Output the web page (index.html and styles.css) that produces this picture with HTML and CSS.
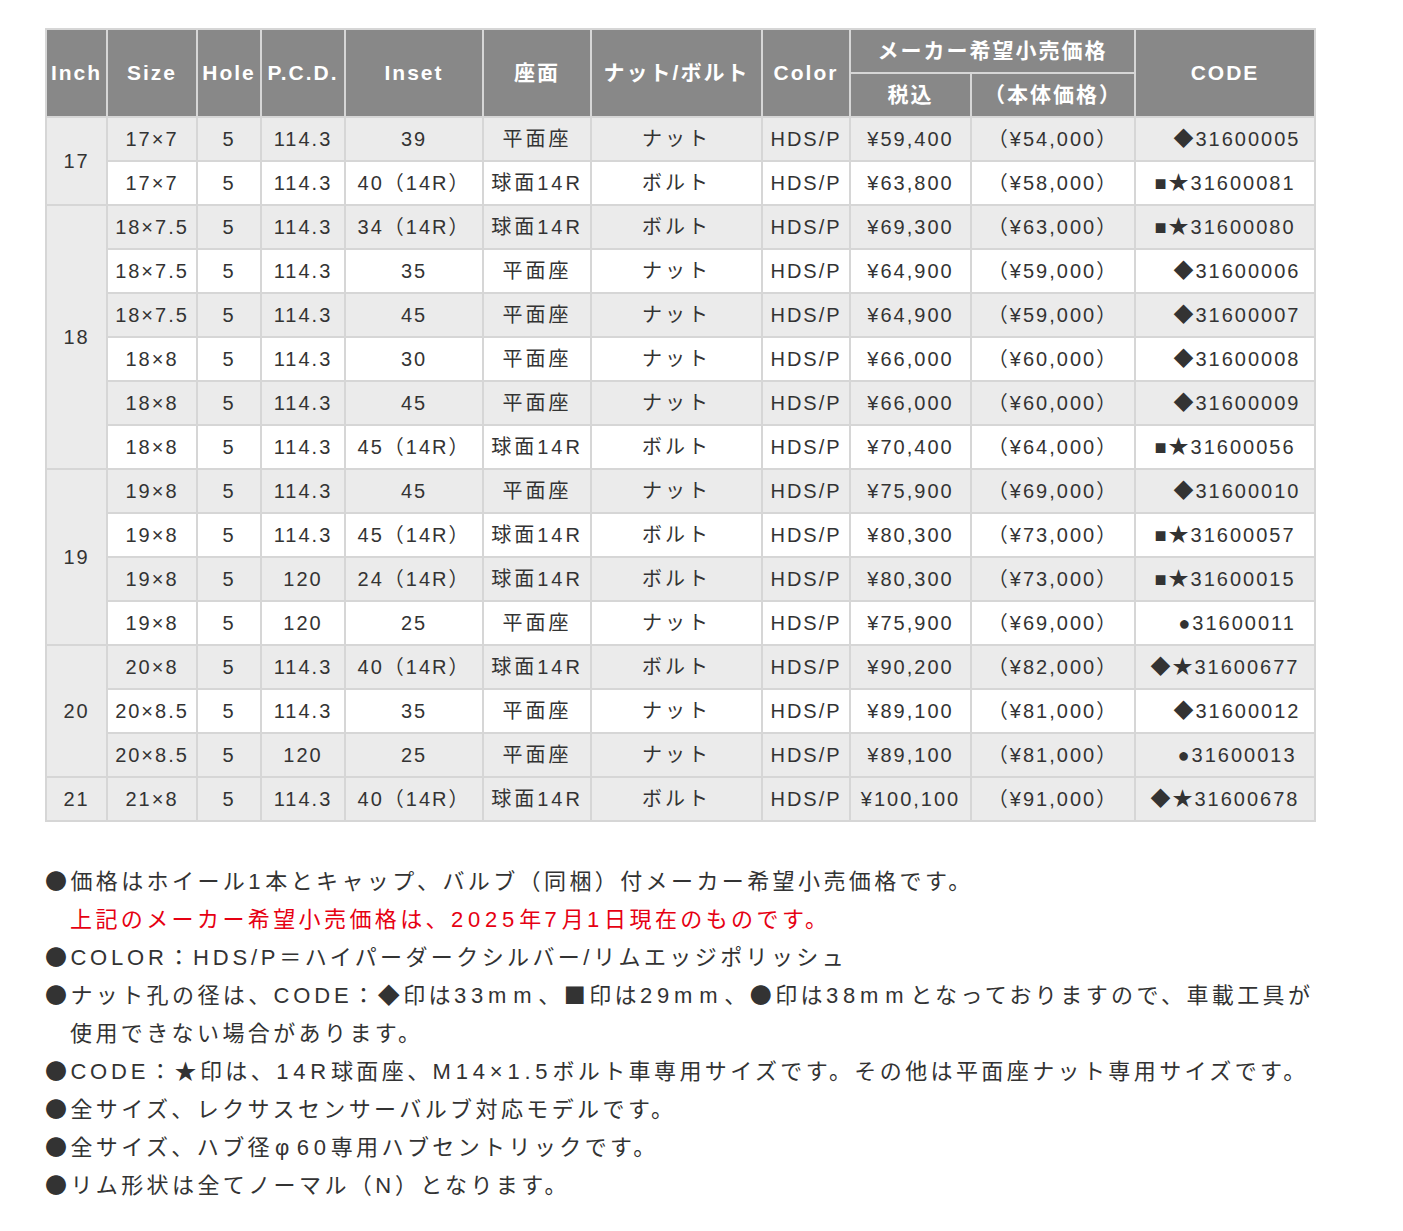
FILE: index.html
```html
<!DOCTYPE html>
<html lang="ja">
<head>
<meta charset="utf-8">
<title>Size table</title>
<link rel="stylesheet" href="styles.css">
</head>
<body>
<div class="page">
  <table class="spec">
    <colgroup>
      <col class="w-inch"><col class="w-size"><col class="w-hole"><col class="w-pcd"><col class="w-inset"><col class="w-seat"><col class="w-nut"><col class="w-color"><col class="w-tax"><col class="w-base"><col class="w-code">
    </colgroup>
    <thead>
      <tr>
        <th rowspan="2">Inch</th>
        <th rowspan="2">Size</th>
        <th rowspan="2">Hole</th>
        <th rowspan="2">P.C.D.</th>
        <th rowspan="2">Inset</th>
        <th rowspan="2">座面</th>
        <th rowspan="2">ナット/ボルト</th>
        <th rowspan="2">Color</th>
        <th colspan="2">メーカー希望小売価格</th>
        <th rowspan="2">CODE</th>
      </tr>
      <tr>
        <th>税込</th>
        <th>（本体価格）</th>
      </tr>
    </thead>
    <tbody>
      <tr class="g">
        <td rowspan="2" class="inch">17</td>
        <td>17×7</td><td>5</td><td>114.3</td><td>39</td><td class="jp">平面座</td><td class="jp">ナット</td><td>HDS/P</td><td>¥59,400</td><td>（¥54,000）</td><td class="code pad">◆31600005</td>
      </tr>
      <tr>
        <td>17×7</td><td>5</td><td>114.3</td><td>40（14R）</td><td class="jp">球面14R</td><td class="jp">ボルト</td><td>HDS/P</td><td>¥63,800</td><td>（¥58,000）</td><td class="code">■★31600081</td>
      </tr>
      <tr class="g">
        <td rowspan="6" class="inch">18</td>
        <td>18×7.5</td><td>5</td><td>114.3</td><td>34（14R）</td><td class="jp">球面14R</td><td class="jp">ボルト</td><td>HDS/P</td><td>¥69,300</td><td>（¥63,000）</td><td class="code">■★31600080</td>
      </tr>
      <tr>
        <td>18×7.5</td><td>5</td><td>114.3</td><td>35</td><td class="jp">平面座</td><td class="jp">ナット</td><td>HDS/P</td><td>¥64,900</td><td>（¥59,000）</td><td class="code pad">◆31600006</td>
      </tr>
      <tr class="g">
        <td>18×7.5</td><td>5</td><td>114.3</td><td>45</td><td class="jp">平面座</td><td class="jp">ナット</td><td>HDS/P</td><td>¥64,900</td><td>（¥59,000）</td><td class="code pad">◆31600007</td>
      </tr>
      <tr>
        <td>18×8</td><td>5</td><td>114.3</td><td>30</td><td class="jp">平面座</td><td class="jp">ナット</td><td>HDS/P</td><td>¥66,000</td><td>（¥60,000）</td><td class="code pad">◆31600008</td>
      </tr>
      <tr class="g">
        <td>18×8</td><td>5</td><td>114.3</td><td>45</td><td class="jp">平面座</td><td class="jp">ナット</td><td>HDS/P</td><td>¥66,000</td><td>（¥60,000）</td><td class="code pad">◆31600009</td>
      </tr>
      <tr>
        <td>18×8</td><td>5</td><td>114.3</td><td>45（14R）</td><td class="jp">球面14R</td><td class="jp">ボルト</td><td>HDS/P</td><td>¥70,400</td><td>（¥64,000）</td><td class="code">■★31600056</td>
      </tr>
      <tr class="g">
        <td rowspan="4" class="inch">19</td>
        <td>19×8</td><td>5</td><td>114.3</td><td>45</td><td class="jp">平面座</td><td class="jp">ナット</td><td>HDS/P</td><td>¥75,900</td><td>（¥69,000）</td><td class="code pad">◆31600010</td>
      </tr>
      <tr>
        <td>19×8</td><td>5</td><td>114.3</td><td>45（14R）</td><td class="jp">球面14R</td><td class="jp">ボルト</td><td>HDS/P</td><td>¥80,300</td><td>（¥73,000）</td><td class="code">■★31600057</td>
      </tr>
      <tr class="g">
        <td>19×8</td><td>5</td><td>120</td><td>24（14R）</td><td class="jp">球面14R</td><td class="jp">ボルト</td><td>HDS/P</td><td>¥80,300</td><td>（¥73,000）</td><td class="code">■★31600015</td>
      </tr>
      <tr>
        <td>19×8</td><td>5</td><td>120</td><td>25</td><td class="jp">平面座</td><td class="jp">ナット</td><td>HDS/P</td><td>¥75,900</td><td>（¥69,000）</td><td class="code pad">●31600011</td>
      </tr>
      <tr class="g">
        <td rowspan="3" class="inch">20</td>
        <td>20×8</td><td>5</td><td>114.3</td><td>40（14R）</td><td class="jp">球面14R</td><td class="jp">ボルト</td><td>HDS/P</td><td>¥90,200</td><td>（¥82,000）</td><td class="code">◆★31600677</td>
      </tr>
      <tr>
        <td>20×8.5</td><td>5</td><td>114.3</td><td>35</td><td class="jp">平面座</td><td class="jp">ナット</td><td>HDS/P</td><td>¥89,100</td><td>（¥81,000）</td><td class="code pad">◆31600012</td>
      </tr>
      <tr class="g">
        <td>20×8.5</td><td>5</td><td>120</td><td>25</td><td class="jp">平面座</td><td class="jp">ナット</td><td>HDS/P</td><td>¥89,100</td><td>（¥81,000）</td><td class="code pad">●31600013</td>
      </tr>
      <tr class="g">
        <td class="inch">21</td>
        <td>21×8</td><td>5</td><td>114.3</td><td>40（14R）</td><td class="jp">球面14R</td><td class="jp">ボルト</td><td>HDS/P</td><td>¥100,100</td><td>（¥91,000）</td><td class="code">◆★31600678</td>
      </tr>
    </tbody>
  </table>

  <div class="notes">
    <p class="note"><span class="sym">●</span>価格はホイール<span class="en">1</span>本とキャップ、バルブ（同梱）付メーカー希望小売価格です。<br><span class="red">上記のメーカー希望小売価格は、<span class="en">2025</span>年<span class="en">7</span>月<span class="en">1</span>日現在のものです。</span></p>
    <p class="note"><span class="sym">●</span><span class="cap">COLOR</span>：<span class="cap">HDS/P</span>＝ハイパーダークシルバー<span class="cap">/</span>リムエッジポリッシュ</p>
    <p class="note"><span class="sym">●</span>ナット孔の径は、<span class="cap">CODE</span>：<span class="sym">◆</span>印は<span class="en">33</span><span class="mm">mm</span>、<span class="sym">■</span>印は<span class="en">29</span><span class="mm">mm</span>、<span class="sym">●</span>印は<span class="en">38</span><span class="mm">mm</span>となっておりますので、車載工具が<br>使用できない場合があります。</p>
    <p class="note"><span class="sym">●</span><span class="cap">CODE</span>：★印は、<span class="en">14R</span>球面座、<span class="en">M14×1.5</span>ボルト車専用サイズです。その他は平面座ナット専用サイズです。</p>
    <p class="note"><span class="sym">●</span>全サイズ、レクサスセンサーバルブ対応モデルです。</p>
    <p class="note"><span class="sym">●</span>全サイズ、ハブ径<span class="phi">φ</span><span class="en">60</span>専用ハブセントリックです。</p>
    <p class="note"><span class="sym">●</span>リム形状は全てノーマル（<span class="cap">N</span>）となります。</p>
  </div>
</div>
</body>
</html>
```
FILE: styles.css
```css
html, body {
  margin: 0;
  padding: 0;
  background: #ffffff;
}

body {
  font-family: "Liberation Sans", "Noto Sans CJK JP", sans-serif;
  color: #333333;
}

.page {
  padding: 28px 0 40px 45px;
}

.spec {
  table-layout: fixed;
  width: 1271px;
  border-collapse: separate;
  border-spacing: 2px;
  background: #d6d6d6;
}

.w-inch { width: 59px; }
.w-size { width: 88px; }
.w-hole { width: 62px; }
.w-pcd { width: 82px; }
.w-inset { width: 136px; }
.w-seat { width: 106px; }
.w-nut { width: 169px; }
.w-color { width: 86px; }
.w-tax { width: 119px; }
.w-base { width: 162px; }
.w-code { width: 178px; }

.spec th {
  background: #888888;
  color: #ffffff;
  font-weight: bold;
  font-size: 21px;
  line-height: 24px;
  letter-spacing: 2px;
  height: 42px;
  padding: 0;
  text-align: center;
  white-space: nowrap;
  overflow: hidden;
}

.spec td {
  background: #ffffff;
  font-size: 20px;
  line-height: 24px;
  letter-spacing: 2px;
  height: 42px;
  padding: 0;
  text-align: center;
  white-space: nowrap;
  overflow: hidden;
}

.spec tr.g td,
.spec td.inch {
  background: #ebebeb;
}

.spec td.jp {
  letter-spacing: 3px;
}

.spec td.code.pad {
  padding-left: 24px;
}

.notes {
  margin-top: 41px;
  width: 1272px;
}

.note {
  margin: 0;
  font-size: 22px;
  line-height: 38px;
  letter-spacing: 3.4px;
  padding-left: 25px;
  text-indent: -25px;
  white-space: nowrap;
  color: #333333;
}

.en {
  letter-spacing: 4.8px;
}

.cap {
  letter-spacing: 3.8px;
}

.mm {
  letter-spacing: 6.8px;
}

.phi {
  margin: 0 4px 0 2px;
}

.sym {
  font-family: "Noto Sans CJK JP", sans-serif;
  line-height: 1;
}

.red {
  color: #e60012;
}
```
